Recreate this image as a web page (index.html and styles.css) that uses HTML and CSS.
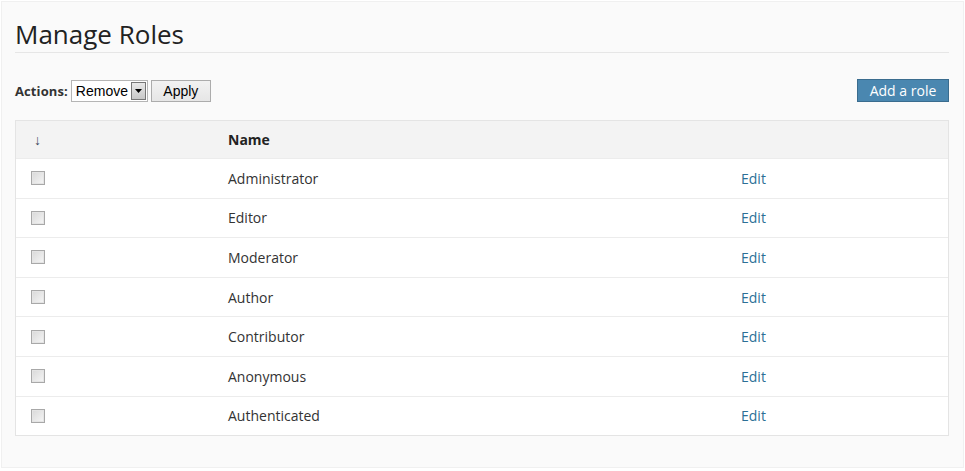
FILE: index.html
```html
<!DOCTYPE html>
<html>
<head>
<meta charset="utf-8">
<link rel="stylesheet" href="styles.css">
</head>
<body>
<div class="page">
  <h1 class="title">Manage Roles</h1>
  <div class="toolbar">
    <div class="actions">
      <label class="actions-label">Actions:</label>
      <div class="select"><span class="select-text">Remove</span><span class="select-arrow"><svg width="7" height="4" viewBox="0 0 7 4"><path d="M0 0h7L3.5 4z" fill="#000"/></svg></span></div>
      <button class="apply">Apply</button>
    </div>
    <button class="add">Add a role</button>
  </div>
  <div class="table">
    <div class="row head"><div class="c1 sort">↓</div><div class="c2">Name</div><div class="c3"></div></div>
    <div class="row"><div class="c1"><span class="cb"></span></div><div class="c2">Administrator</div><div class="c3"><a>Edit</a></div></div>
    <div class="row"><div class="c1"><span class="cb"></span></div><div class="c2">Editor</div><div class="c3"><a>Edit</a></div></div>
    <div class="row"><div class="c1"><span class="cb"></span></div><div class="c2">Moderator</div><div class="c3"><a>Edit</a></div></div>
    <div class="row"><div class="c1"><span class="cb"></span></div><div class="c2">Author</div><div class="c3"><a>Edit</a></div></div>
    <div class="row"><div class="c1"><span class="cb"></span></div><div class="c2">Contributor</div><div class="c3"><a>Edit</a></div></div>
    <div class="row"><div class="c1"><span class="cb"></span></div><div class="c2">Anonymous</div><div class="c3"><a>Edit</a></div></div>
    <div class="row"><div class="c1"><span class="cb"></span></div><div class="c2">Authenticated</div><div class="c3"><a>Edit</a></div></div>
  </div>
</div>
</body>
</html>
```
FILE: styles.css
```css
html, body { margin: 0; padding: 0; background: #ffffff; }
body { font-family: "Open Sans", "Noto Sans", sans-serif; color: #333; }
.page {
  margin: 1px;
  height: 467px;
  box-sizing: border-box;
  border: 1px solid #f0f0f0;
  background: #fafafa;
  padding: 0 14px 0 13px;
}
.title {
  margin: 0;
  padding-top: 14px;
  font-size: 26px;
  font-weight: 400;
  line-height: 36px;
  color: #222;
  border-bottom: 1px solid #e6e6e6;
  height: 36px;
}
.toolbar {
  display: flex;
  justify-content: space-between;
  align-items: center;
  margin-top: 26px;
  height: 23px;
}
.actions { display: flex; align-items: center; }
.actions-label { font-weight: 700; font-size: 13px; color: #333; margin-right: 3px; letter-spacing: 0.1px; }
.select {
  display: flex;
  align-items: center;
  height: 22px;
  width: 77px;
  box-sizing: border-box;
  border: 1px solid #b5b5b5;
  background: #fff;
  font-family: "Liberation Sans", Arial, sans-serif;
  font-size: 14px;
  color: #000;
  padding: 0 1px 0 4px;
}
.select-text { flex: 1; }
.select-arrow {
  width: 15px; height: 18px; box-sizing: border-box;
  border: 1px solid #777;
  background: linear-gradient(#e8e8e8, #c8c8c8);
  display: flex; align-items: center; justify-content: center;
}
.apply {
  margin-left: 3px;
  width: 60px; height: 22px;
  border: 1px solid #acacac;
  background: linear-gradient(#f2f2f2, #e6e6e6);
  font-family: "Liberation Sans", Arial, sans-serif;
  font-size: 14px; color: #000;
  padding: 0;
}
.add {
  width: 92px; height: 23px;
  background: #4a87b0;
  border: 1px solid #3a6c8e;
  color: #fff;
  font-family: inherit;
  font-size: 14px;
  padding: 0;
}
.table {
  margin-top: 18px;
  border: 1px solid #e4e4e4;
  background: #fff;
}
.row {
  display: grid;
  grid-template-columns: 197px 513px 1fr;
  padding-left: 15px;
  height: 39.6px;
  align-items: center;
  border-top: 1px solid #ececec;
  font-size: 14px;
  color: #333;
  box-sizing: border-box;
}
.row.head { border-top: 0; height: 37px; background: #f3f3f3; font-weight: 700; color: #222; }
.sort { padding-left: 3px; color: #3c4a5a; font-weight: 400; }
.cb {
  display: block;
  width: 14px; height: 14px; box-sizing: border-box;
  border: 1px solid #a8a8a8;
  background: linear-gradient(135deg, #d8d8d8, #f6f6f6);
  box-shadow: inset 0 0 0 1px #e4e4e4;
}
.c3 a { color: #2c6f96; }
```
